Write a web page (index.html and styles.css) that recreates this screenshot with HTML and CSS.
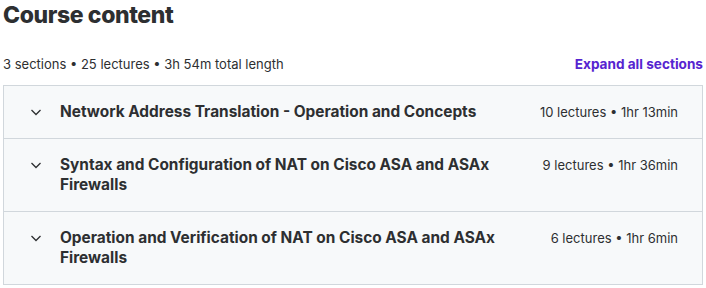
FILE: index.html
```
<!DOCTYPE html>
<html lang="en">
<head>
    <meta charset="UTF-8">
    <meta name="viewport" content="width=device-width, initial-scale=1.0">
    <title>Course content</title>
    <link rel="stylesheet" href="styles.css">
</head>
<body>
    <div class="curriculum">
        <h2>Course content</h2>
        <div class="summary">
            <span>3 sections • 25 lectures • 3h 54m total length</span>
            <button class="expand-all">Expand all sections</button>
        </div>
        <div class="sections">
            <div class="section">
                <svg class="chevron" viewBox="0 0 16 16" width="16" height="16"><path d="M3.5 6 L8 10.5 L12.5 6" fill="none" stroke="#2d2f31" stroke-width="1.3"/></svg>
                <h3>Network Address Translation - Operation and Concepts</h3>
                <span class="meta">10 lectures • 1hr 13min</span>
            </div>
            <div class="section">
                <svg class="chevron" viewBox="0 0 16 16" width="16" height="16"><path d="M3.5 6 L8 10.5 L12.5 6" fill="none" stroke="#2d2f31" stroke-width="1.3"/></svg>
                <h3>Syntax and Configuration of NAT on Cisco ASA and ASAx Firewalls</h3>
                <span class="meta">9 lectures • 1hr 36min</span>
            </div>
            <div class="section">
                <svg class="chevron" viewBox="0 0 16 16" width="16" height="16"><path d="M3.5 6 L8 10.5 L12.5 6" fill="none" stroke="#2d2f31" stroke-width="1.3"/></svg>
                <h3>Operation and Verification of NAT on Cisco ASA and ASAx Firewalls</h3>
                <span class="meta">6 lectures • 1hr 6min</span>
            </div>
        </div>
    </div>
</body>
</html>
```
FILE: styles.css
```
body {
    font-family: Inter, "Noto Sans", sans-serif;
    color: #2d2f31;
    background-color: #fff;
    margin: 0;
}

.curriculum {
    width: 700px;
    padding: 0 3px;
}

h2 {
    font-size: 23px;
    font-weight: 800;
    line-height: 30px;
    margin: 0 0 24px;
    letter-spacing: -0.4px;
}

.summary {
    display: flex;
    justify-content: space-between;
    align-items: center;
    font-size: 13px;
    line-height: 20px;
    margin-bottom: 11px;
}

.expand-all {
    background: none;
    border: none;
    padding: 0;
    font-family: inherit;
    font-size: 13.6px;
    font-weight: 700;
    color: #5624d0;
    cursor: pointer;
}

.sections {
    border: 1px solid #d1d7dc;
    border-bottom: none;
    width: 698px;
}

.section {
    display: flex;
    align-items: flex-start;
    gap: 16px;
    padding: 16px 24px;
    background-color: #f7f9fa;
    border-bottom: 1px solid #d1d7dc;
}

.chevron {
    flex-shrink: 0;
    margin-top: 2px;
}

.section h3 {
    flex: 1;
    margin: 0;
    font-size: 15.4px;
    font-weight: 700;
    line-height: 20px;
    max-width: 440px;
}

.meta {
    margin-left: auto;
    font-size: 13px;
    line-height: 20px;
    white-space: nowrap;
}
```
